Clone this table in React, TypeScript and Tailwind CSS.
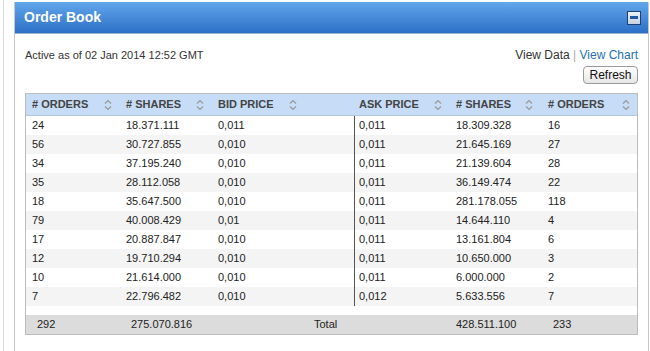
const bids = [
  ['24', '18.371.111', '0,011'],
  ['56', '30.727.855', '0,010'],
  ['34', '37.195.240', '0,010'],
  ['35', '28.112.058', '0,010'],
  ['18', '35.647.500', '0,010'],
  ['79', '40.008.429', '0,01'],
  ['17', '20.887.847', '0,010'],
  ['12', '19.710.294', '0,010'],
  ['10', '21.614.000', '0,010'],
  ['7', '22.796.482', '0,010'],
];

const asks = [
  ['0,011', '18.309.328', '16'],
  ['0,011', '21.645.169', '27'],
  ['0,011', '21.139.604', '28'],
  ['0,011', '36.149.474', '22'],
  ['0,011', '281.178.055', '118'],
  ['0,011', '14.644.110', '4'],
  ['0,011', '13.161.804', '6'],
  ['0,011', '10.650.000', '3'],
  ['0,011', '6.000.000', '2'],
  ['0,012', '5.633.556', '7'],
];

const cols = 'grid grid-cols-[93px_92px_93px_50px_95px_92px_98px]';

function SortIcon() {
  return (
    <svg width="8" height="12" viewBox="0 0 8 12" className="shrink-0">
      <path d="M1 4.5 L4 1.5 L7 4.5" fill="none" stroke="#999" strokeWidth="1.2" />
      <path d="M1 7.5 L4 10.5 L7 7.5" fill="none" stroke="#999" strokeWidth="1.2" />
    </svg>
  );
}

function HeadCell({ label, className }: { label: string; className: string }) {
  return (
    <div className={`flex items-center justify-between ${className}`}>
      <span>{label}</span>
      <SortIcon />
    </div>
  );
}

export default function App() {
  return (
    <div className="h-[351px] w-[650px] overflow-hidden bg-white font-['Liberation_Sans',Arial,sans-serif]">
      <div className="ml-[3px] h-full border-l border-[#dcdcdc] pl-[10px] pt-[2px]">
        <div className="h-full w-[635px] border-x border-[#c8c8c8]">
          {/* Panel header */}
          <div className="flex h-[32px] items-center justify-between border-b border-[#9fb4cc] bg-gradient-to-b from-[#62a6ec] to-[#2b70c6] pl-[9px] pr-[7px]">
            <span className="text-[14px] font-bold text-white">Order Book</span>
            <div className="flex h-[14px] w-[14px] flex-col justify-center border border-[#1d3f78] bg-gradient-to-b from-[#e8f0fb] to-[#c8d2de] px-[2px]">
              <div className="h-[3px] bg-[#2456a6]" />
            </div>
          </div>

          <div className="px-[10px] pt-[12px]">
            <div className="flex items-center justify-between text-[#333]">
              <span className="text-[11px]">Active as of 02 Jan 2014 12:52 GMT</span>
              <span className="text-[12px]">
                View Data <span className="text-[#aaa]">|</span>{' '}
                <span className="text-[#1f6fb8]">View Chart</span>
              </span>
            </div>
            <div className="mt-[2px] flex justify-end">
              <button className="h-[18px] w-[55px] rounded-[4px] border border-[#9a9a9a] bg-gradient-to-b from-white to-[#e6e6e6] text-[12px] leading-none text-[#111]">
                Refresh
              </button>
            </div>

            {/* Table */}
            <div className="mt-[9px] border border-[#bcbcbc] text-[11px] text-[#222]">
              <div className={`${cols} h-[22px] border-b border-[#b5c6dc] bg-[#c7dcf6] font-bold text-[#444]`}>
                <HeadCell label="# ORDERS" className="pl-[6px] pr-[7px]" />
                <HeadCell label="# SHARES" className="pl-[7px] pr-[7px]" />
                <HeadCell label="BID PRICE" className="pl-[7px] pr-[7px]" />
                <div />
                <HeadCell label="ASK PRICE" className="pl-[5px] pr-[7px]" />
                <HeadCell label="# SHARES" className="pl-[7px] pr-[8px]" />
                <HeadCell label="# ORDERS" className="pl-[7px] pr-[9px]" />
              </div>

              {bids.map((b, i) => (
                <div key={i} className={`${cols} h-[19px] items-stretch ${i % 2 ? 'bg-[#f4f4f4]' : 'bg-white'}`}>
                  <div className="flex items-center pl-[6px]">{b[0]}</div>
                  <div className="flex items-center pl-[7px]">{b[1]}</div>
                  <div className="flex items-center pl-[7px]">{b[2]}</div>
                  <div />
                  <div className="flex items-center border-l border-[#555] pl-[4px]">{asks[i][0]}</div>
                  <div className="flex items-center pl-[7px]">{asks[i][1]}</div>
                  <div className="flex items-center pl-[7px]">{asks[i][2]}</div>
                </div>
              ))}

              <div className="h-[9px]" />

              <div className={`${cols} h-[19px] items-center bg-[#dcdcdc]`}>
                <div className="pl-[11px]">292</div>
                <div className="pl-[12px]">275.070.816</div>
                <div />
                <div className="pl-[10px]">Total</div>
                <div />
                <div className="pl-[7px]">428.511.100</div>
                <div className="pl-[12px]">233</div>
              </div>
            </div>
          </div>
        </div>
      </div>
    </div>
  );
}
